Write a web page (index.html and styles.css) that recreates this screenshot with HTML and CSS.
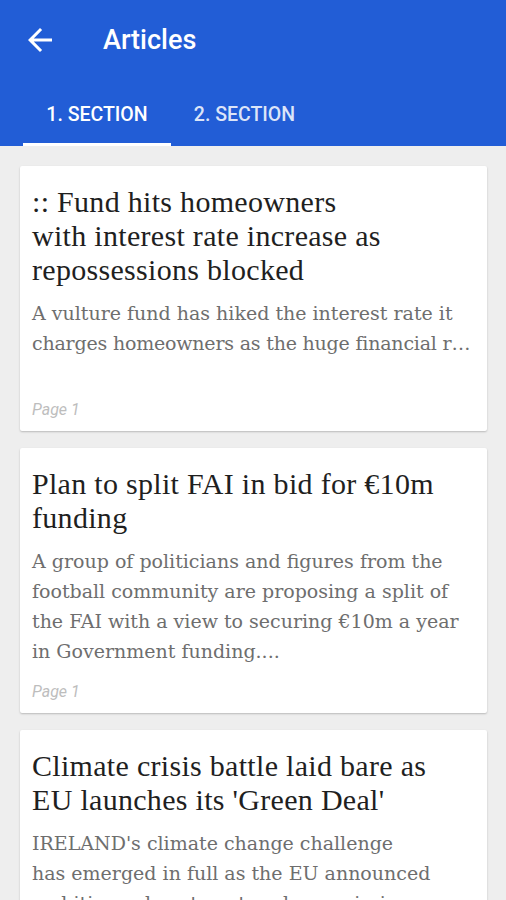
FILE: index.html
```html
<!DOCTYPE html>
<html lang="en">
<head>
    <meta charset="UTF-8">
    <meta name="viewport" content="width=device-width, initial-scale=1.0">
    <title>Articles</title>
    <link rel="stylesheet" href="styles.css">
</head>
<body>
    <header class="appbar">
        <div class="toolbar">
            <svg class="back" width="36" height="36" viewBox="0 0 24 24">
                <path d="M20 11H7.83l5.59-5.59L12 4l-8 8 8 8 1.41-1.41L7.83 13H20v-2z" fill="#fff"/>
            </svg>
            <h1 class="title">Articles</h1>
        </div>
        <nav class="tabs">
            <div class="tab active">1. SECTION</div>
            <div class="tab">2. SECTION</div>
        </nav>
    </header>

    <main class="list">
        <article class="card">
            <h2 class="headline">:: Fund hits homeowners<br>with interest rate increase as repossessions blocked</h2>
            <p class="snippet">
                <span class="line">A vulture fund has hiked the interest rate it</span>
                <span class="line cut">charges homeowners as the huge financial repercussions of the ban on repossessions become clear.</span>
            </p>
            <div class="page">Page 1</div>
        </article>
        <article class="card">
            <h2 class="headline">Plan to split FAI in bid for &euro;10m funding</h2>
            <p class="snippet">A group of politicians and figures from the football community are proposing a split of the FAI with a view to securing &euro;10m a year in Government funding....</p>
            <div class="page">Page 1</div>
        </article>
        <article class="card">
            <h2 class="headline">Climate crisis battle laid bare as EU launches its 'Green Deal'</h2>
            <p class="snippet">IRELAND's climate change challenge<br>has emerged in full as the EU announced ambitious plans to cut carbon emissions</p>
            <div class="page">Page 1</div>
        </article>
    </main>
</body>
</html>
```

FILE: styles.css
```css
body {
    margin: 0;
    padding: 0;
    background-color: #eeeeee;
    font-family: Roboto, 'Noto Sans', sans-serif;
    overflow: hidden;
}
.appbar {
    background-color: #225dd6;
    color: white;
    height: 146px;
    display: flex;
    flex-direction: column;
}
.toolbar {
    height: 80px;
    flex-shrink: 0;
    display: flex;
    align-items: center;
    padding-left: 22px;
}
.back {
    width: 36px;
    height: 36px;
}
.title {
    margin: 0 0 0 45px;
    font-size: 27px;
    font-weight: 500;
}
.tabs {
    display: flex;
    padding-left: 23px;
}
.tab {
    width: 148px;
    text-align: center;
    font-size: 19.5px;
    font-weight: 500;
    padding-top: 6px;
    line-height: 57px;
    color: rgba(255, 255, 255, 0.85);
    border-bottom: 3px solid transparent;
}
.tab + .tab {
    width: 147px;
}
.tab.active {
    color: white;
    border-bottom-color: white;
}
.list {
    padding: 20px 19px 0 20px;
    display: flex;
    flex-direction: column;
    gap: 17px;
}
.card {
    background: white;
    height: 265px;
    box-sizing: border-box;
    padding: 19px 16px 12px 12px;
    border-radius: 2px;
    box-shadow: 0 1px 2px rgba(0, 0, 0, 0.22);
    display: flex;
    flex-direction: column;
    flex-shrink: 0;
}
.headline {
    margin: 0;
    font-family: 'Liberation Serif', serif;
    font-weight: normal;
    font-size: 30px;
    letter-spacing: 0.3px;
    line-height: 34px;
    color: #1f1f1f;
}
.snippet {
    margin: 11px 0 0 0;
    font-family: 'DejaVu Serif', serif;
    font-size: 19px;
    line-height: 30px;
    color: #6e6e6e;
}
.line {
    display: block;
}
.cut {
    margin-right: -6px;
    letter-spacing: -0.2px;
    white-space: nowrap;
    overflow: hidden;
    text-overflow: ellipsis;
}
.page {
    margin-top: auto;
    font-size: 16px;
    font-style: italic;
    color: #bdbdbd;
}
```
